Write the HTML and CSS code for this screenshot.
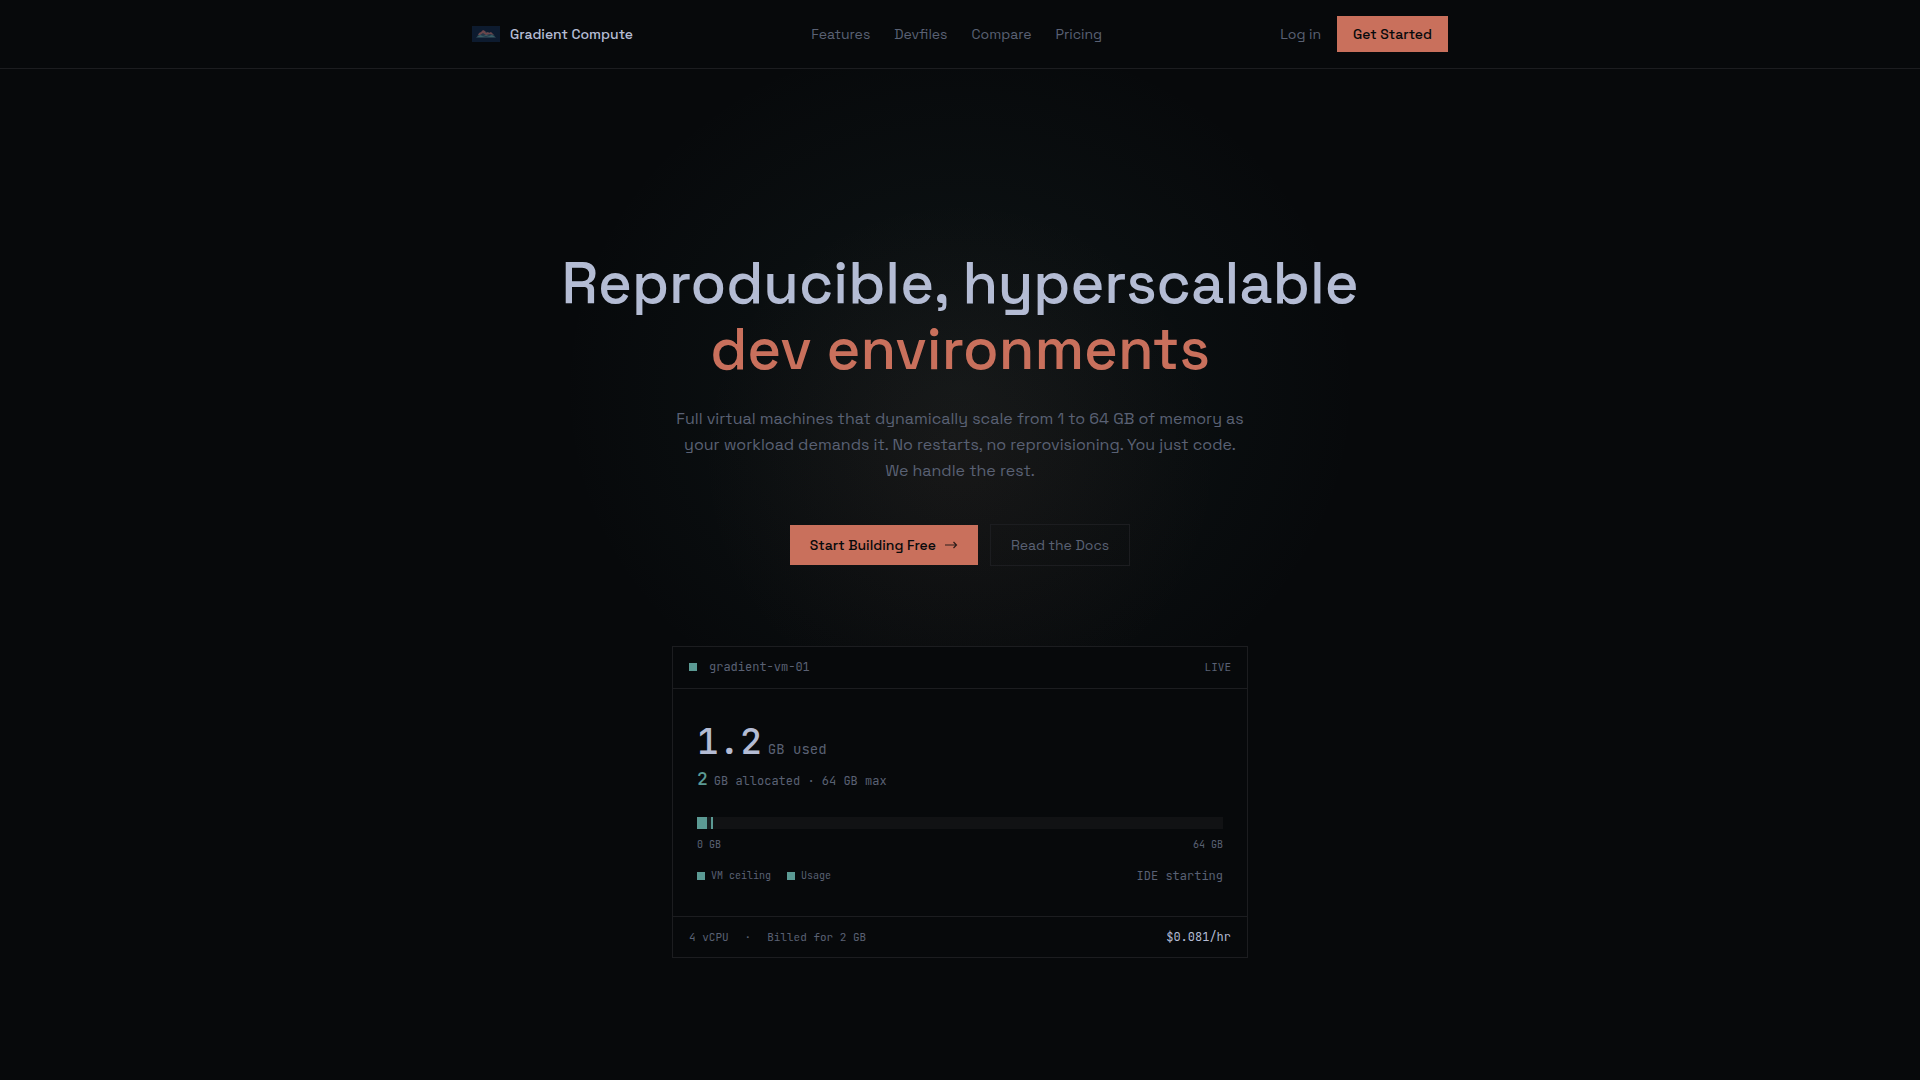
FILE: index.html
```html
<!DOCTYPE html>
<html lang="en">
<head>
    <meta charset="UTF-8">
    <meta name="viewport" content="width=device-width, initial-scale=1.0">
    <title>Gradient Compute</title>
    <link rel="stylesheet" href="styles.css">
</head>
<body>

<header class="site-header">
    <nav class="nav">
        <a class="brand" href="#">
            <svg class="brand-logo" viewBox="0 0 28 16" aria-hidden="true">
                <rect width="28" height="16" fill="#0d1b2f"/>
                <path d="M4 12 L6 9 L9 7 L12 5 L15 6 L19 7 L22 9 L24 12 Z" fill="#25394a"/>
                <path d="M6 9 L7 7 L9 6 L11 4 L13 5 L14 7 L16 6 L17 7 L19 6 L21 8 L22 9 L18 8 L14 9 L11 7 L8 9 Z" fill="#6a474c"/>
                <path d="M5 11 L8 9 L11 10 L14 9 L17 10 L20 9 L23 11 L18 11 L14 10 L10 11 Z" fill="#3a5f66"/>
            </svg>
            Gradient Compute
        </a>
        <div class="nav-links">
            <a href="#features">Features</a>
            <a href="#devfiles">Devfiles</a>
            <a href="#compare">Compare</a>
            <a href="#pricing">Pricing</a>
        </div>
        <div class="nav-actions">
            <a href="#login">Log in</a>
            <a class="btn-small" href="#signup">Get Started</a>
        </div>
    </nav>
</header>

<main class="hero">
    <h1>Reproducible, hyperscalable <span class="accent">dev environments</span></h1>
    <p class="lead">Full virtual machines that dynamically scale from 1 to 64 GB of memory as your workload demands it. No restarts, no reprovisioning. You just code. We handle the rest.</p>

    <div class="hero-actions">
        <a class="btn btn-primary" href="#signup">
            Start Building Free
            <svg class="arrow" viewBox="0 0 14 14" aria-hidden="true">
                <path d="M1 7 H12.500 M9.500 4 L12.500 7 L9.500 10" fill="none" stroke="currentColor" stroke-width="1.200"/>
            </svg>
        </a>
        <a class="btn btn-outline" href="#docs">Read the Docs</a>
    </div>

    <section class="vm-card">
        <div class="vm-header">
            <span class="vm-name"><i class="dot"></i>gradient-vm-01</span>
            <span class="vm-status">LIVE</span>
        </div>
        <div class="vm-body">
            <div class="used"><span class="used-value">1.2</span><span>GB used</span></div>
            <div class="allocated"><span class="allocated-value">2</span><span>GB allocated · 64 GB max</span></div>
            <div class="bar">
                <div class="bar-ceiling" style="width: 3.125%"></div>
                <div class="bar-usage" style="width: 1.875%"></div>
            </div>
            <div class="scale"><span>0 GB</span><span>64 GB</span></div>
            <div class="legend">
                <div class="legend-items">
                    <span class="legend-item"><i class="dot"></i>VM ceiling</span>
                    <span class="legend-item"><i class="dot"></i>Usage</span>
                </div>
                <span class="phase">IDE starting</span>
            </div>
        </div>
        <div class="vm-footer">
            <div class="specs"><span>4 vCPU</span><span>·</span><span>Billed for 2 GB</span></div>
            <span class="price">$0.081/hr</span>
        </div>
    </section>
</main>

</body>
</html>
```
FILE: styles.css
```css
:root {
    --bg: #07090b;
    --line: #1c1d20;
    --text: #b4bcd4;
    --muted: #5a6174;
    --coral: #c9705c;
    --teal: #5b9a94;
    --sans: "Space Grotesk", Inter, sans-serif;
    --mono: "JetBrains Mono", "DejaVu Sans Mono", monospace;
}

* {
    box-sizing: border-box;
}

body {
    margin: 0;
    min-height: 100vh;
    display: flex;
    flex-direction: column;
    background: var(--bg);
    color: var(--muted);
    font-family: var(--sans);
    font-size: 14px;
    line-height: 20px;
}

a {
    color: inherit;
    text-decoration: none;
}

/* Header */
.site-header {
    border-bottom: 1px solid var(--line);
}

.nav {
    max-width: 1024px;
    margin: 0 auto;
    padding: 16px 24px;
    display: flex;
    align-items: center;
    justify-content: space-between;
}

.brand {
    display: flex;
    align-items: center;
    gap: 10px;
    color: var(--text);
    font-weight: 500;
}

.brand-logo {
    width: 28px;
    height: 16px;
}

.nav-links {
    display: flex;
    gap: 24px;
}

.nav-actions {
    display: flex;
    align-items: center;
    gap: 16px;
}

.btn-small {
    padding: 8px 16px;
    background: var(--coral);
    color: var(--bg);
    font-weight: 500;
}

/* Hero */
.hero {
    flex: 1;
    display: flex;
    flex-direction: column;
    align-items: center;
    justify-content: center;
    padding: 82px 24px 24px;
    text-align: center;
    background:
        radial-gradient(circle 260px at 50% 390px, rgba(201, 112, 92, 0.06), transparent),
        radial-gradient(ellipse 400px 360px at 50% 320px, rgba(91, 154, 148, 0.08), transparent);
}

h1 {
    margin: 0 0 24px;
    color: var(--text);
    font-size: 58px;
    font-weight: 500;
    line-height: 66px;
}

.accent {
    display: block;
    color: var(--coral);
}

.lead {
    max-width: 576px;
    margin: 0 0 40px;
    font-size: 16px;
    line-height: 26px;
}

.hero-actions {
    display: flex;
    align-items: center;
    gap: 12px;
    margin-bottom: 80px;
}

.btn {
    display: flex;
    align-items: center;
    gap: 8px;
    padding: 10px 20px;
}

.btn-primary {
    background: var(--coral);
    color: var(--bg);
    font-weight: 500;
}

.btn-outline {
    border: 1px solid var(--line);
}

.arrow {
    width: 14px;
    height: 14px;
    opacity: 0.8;
}

/* VM card */
.vm-card {
    width: 100%;
    max-width: 576px;
    border: 1px solid var(--line);
    background: var(--bg);
    font-family: var(--mono);
    font-size: 12px;
    text-align: left;
}

.dot {
    width: 8px;
    height: 8px;
    background: var(--teal);
}

.vm-header,
.vm-footer {
    display: flex;
    align-items: center;
    justify-content: space-between;
    padding: 10px 16px;
}

.vm-header {
    padding-bottom: 11px;
    border-bottom: 1px solid var(--line);
}

.vm-footer {
    border-top: 1px solid var(--line);
}

.vm-name {
    display: flex;
    align-items: center;
    gap: 12px;
}

.vm-status {
    font-size: 11px;
}

.vm-body {
    padding: 32px 24px 30px;
}

.used,
.allocated {
    display: flex;
    align-items: baseline;
    gap: 6px;
}

.used {
    margin-bottom: 4px;
    font-size: 14px;
}

.used-value {
    color: var(--text);
    font-size: 36px;
    font-weight: 500;
    line-height: 40px;
}

.allocated {
    margin-bottom: 24px;
}

.allocated-value {
    color: var(--teal);
    font-size: 18px;
    font-weight: 500;
    line-height: 28px;
}

.bar {
    display: grid;
    height: 12px;
    background: #111214;
}

.bar-ceiling,
.bar-usage {
    grid-area: 1 / 1;
}

.bar-ceiling {
    background: #171e20;
    border-right: 2px solid var(--teal);
}

.bar-usage {
    background: var(--teal);
}

.scale {
    display: flex;
    justify-content: space-between;
    margin: 8px 0 13px;
    font-size: 10px;
    line-height: 16px;
}

.legend {
    display: flex;
    align-items: center;
    justify-content: space-between;
}

.legend-items {
    display: flex;
    gap: 16px;
    font-size: 10px;
}

.legend-item {
    display: flex;
    align-items: center;
    gap: 6px;
}

.specs {
    display: flex;
    gap: 16px;
    font-size: 11px;
}

.price {
    color: var(--text);
}
```
